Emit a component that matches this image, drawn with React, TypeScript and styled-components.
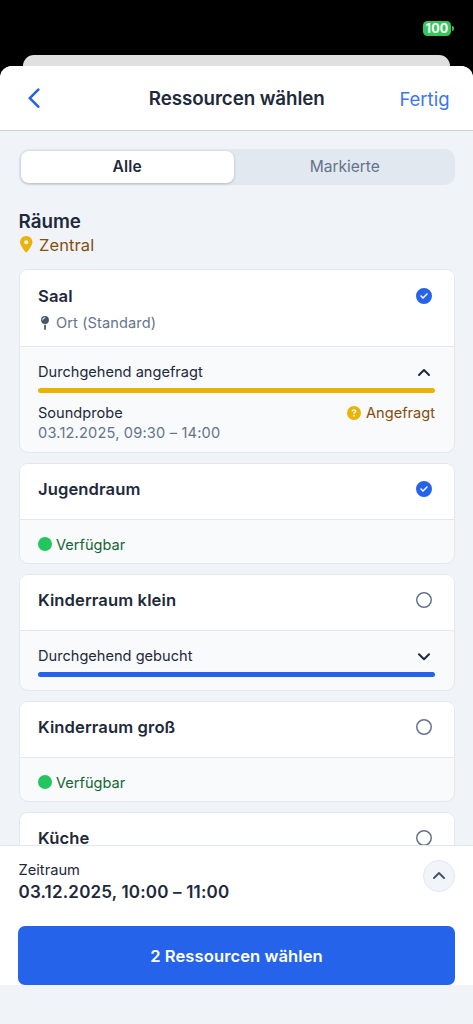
import React from "react";
import styled, { createGlobalStyle } from "styled-components";
import {
  FaCircle,
  FaCircleCheck,
  FaCircleQuestion,
  FaLocationDot,
  FaMapPin,
  FaRegCircle,
} from "react-icons/fa6";

const GlobalStyle = createGlobalStyle`
  *, *::before, *::after { box-sizing: border-box; }
  body {
    margin: 0;
    background: #000;
    color: #1e293b;
    font-family: Inter, "Liberation Sans", sans-serif;
  }
  h1, h2, h3, p { margin: 0; }
  button { border: 0; padding: 0; margin: 0; background: none; font: inherit; color: inherit; }
  svg { display: block; flex: none; }
`;

const Screen = styled.div`
  display: flex;
  flex-direction: column;
  height: 1024px;
  overflow: hidden;
  background: #000;
`;

const StatusBar = styled.div`
  display: flex;
  justify-content: flex-end;
  flex: none;
  height: 55px;
  padding: 20.5px 19.5px 0 0;
`;

const Battery = styled.div`
  display: flex;
  align-items: center;
  gap: 1px;
  height: 15.5px;
`;

const BatteryBody = styled.div`
  width: 28px;
  height: 15.5px;
  border-radius: 4.5px;
  background: #34c759;
  color: #fff;
  font-size: 12.5px;
  line-height: 15.5px;
  font-weight: 700;
  letter-spacing: 0.2px;
  text-align: center;
`;

const BatteryTip = styled.div`
  width: 1.5px;
  height: 5px;
  border-radius: 0 2px 2px 0;
  background: #34c759;
`;

const SheetBehind = styled.div`
  flex: none;
  height: 11px;
  margin: 0 23px;
  border-radius: 11px 11px 0 0;
  background: #e0e0e0;
`;

const Sheet = styled.div`
  display: flex;
  flex-direction: column;
  flex: 1;
  min-height: 0;
  border-radius: 12px 12px 0 0;
  background: #f0f4f8;
  overflow: hidden;
`;

const NavBar = styled.header`
  display: grid;
  grid-template-columns: 1fr auto 1fr;
  align-items: center;
  flex: none;
  height: 65px;
  padding: 0 23.5px 0 27px;
  border-bottom: 1px solid #cbcfd4;
  background: #fff;
`;

const NavTitle = styled.h1`
  margin: 2px 3px 0 0;
  font-size: 18.8px;
  line-height: 24px;
  font-weight: 600;
  letter-spacing: -0.1px;
`;

const NavAction = styled.button`
  justify-self: end;
  margin-top: 2px;
  color: #3b76f0;
  font-size: 18.5px;
  line-height: 24px;
`;

const Content = styled.main`
  flex: 1;
  min-height: 0;
  padding: 18px 18.5px 0 18.5px;
  overflow: hidden;
`;

const Segments = styled.div`
  display: flex;
  height: 36px;
  padding: 2px;
  border-radius: 10px;
  background: #e2e8f0;
`;

const Segment = styled.button<{ $active?: boolean }>`
  flex: ${(p) => (p.$active ? "0 0 213.5px" : "1")};
  padding: ${(p) => (p.$active ? "0 0 1px" : "0 0 1px 3px")};
  border-radius: 8px;
  background: ${(p) => (p.$active ? "#fff" : "transparent")};
  box-shadow: ${(p) => (p.$active ? "0 1px 3px rgba(15, 23, 42, 0.22)" : "none")};
  color: ${(p) => (p.$active ? "#1e293b" : "#64748b")};
  font-size: 15.6px;
  font-weight: ${(p) => (p.$active ? 600 : 400)};
  letter-spacing: ${(p) => (p.$active ? "0.2px" : "-0.05px")};
`;

const GroupTitle = styled.h2`
  margin-top: 24px;
  font-size: 18.8px;
  line-height: 25px;
  font-weight: 600;
`;

const Location = styled.div`
  display: flex;
  align-items: center;
  gap: 4.5px;
  height: 22px;
  color: #854d0e;
  font-size: 16.5px;
  letter-spacing: 0.1px;
  svg { color: #eab308; margin: -1px 0 0 -0.5px; }
`;

const Cards = styled.div`
  display: flex;
  flex-direction: column;
  gap: 10px;
  margin-top: 13px;
`;

const Card = styled.section`
  border: 1px solid #e2e8f0;
  border-radius: 9px;
  background: #f8fafc;
  overflow: hidden;
`;

const CardHead = styled.div<{ $tall?: boolean }>`
  display: flex;
  justify-content: space-between;
  align-items: flex-start;
  height: ${(p) => (p.$tall ? 77 : 56)}px;
  padding: ${(p) => (p.$tall ? 15 : 14)}px 22px 0 18.5px;
  border-bottom: 1px solid #e2e8f0;
  background: #fff;
`;

const CardTitle = styled.h3`
  font-size: 16.6px;
  line-height: 22px;
  font-weight: 600;
  letter-spacing: 0.1px;
`;

const CardPlace = styled.p`
  display: flex;
  align-items: center;
  gap: 4.5px;
  margin-top: 6px;
  color: #64748b;
  font-size: 14.6px;
  line-height: 21px;
  letter-spacing: 0.1px;
  svg { margin: -2px 0 0 -0.5px; color: #475569; }
`;

const Mark = styled.span<{ $on?: boolean }>`
  margin-top: 3px;
  color: ${(p) => (p.$on ? "#2563eb" : "#64748b")};
`;

const Available = styled.div`
  display: flex;
  align-items: center;
  gap: 4.5px;
  height: 43px;
  padding: 6px 18px 0;
  color: #166534;
  font-size: 14.6px;
  svg { margin-top: -1px; color: #22c55e; }
`;

const Booking = styled.div<{ $height: number }>`
  height: ${(p) => p.$height}px;
  padding: 15px 18.5px 0 18.5px;
  font-size: 14.6px;
  line-height: 21px;
`;

const BookingRow = styled.div`
  display: flex;
  justify-content: space-between;
  align-items: center;
`;

const ToggleIcon = styled.span`
  padding-right: 4.5px;
`;

const Bar = styled.div<{ $color: string }>`
  height: 4.5px;
  margin: 5px 0 10.5px -0.5px;
  border-radius: 3px;
  background: ${(p) => p.$color};
`;

const Muted = styled.p`
  color: #64748b;
  line-height: 19px;
  letter-spacing: 0.18px;
`;

const Requested = styled.span`
  display: flex;
  align-items: center;
  gap: 5px;
  color: #854d0e;
  svg { margin-top: -1px; color: #eab308; }
`;

const Footer = styled.footer`
  flex: none;
  height: 140px;
  padding: 13px 18px 0;
  border-top: 1px solid #e2e8f0;
  background: #fff;
`;

const Period = styled.div`
  display: flex;
  justify-content: space-between;
  height: 67px;
  padding-left: 0.5px;
`;

const PeriodLabel = styled.p`
  padding-top: 1px;
  font-size: 14.7px;
  line-height: 21px;
`;

const PeriodValue = styled.p`
  font-size: 17px;
  line-height: 22px;
  font-weight: 600;
  letter-spacing: 0.18px;
`;

const RoundButton = styled.button`
  display: grid;
  place-items: center;
  width: 32px;
  height: 32px;
  margin-top: 0.5px;
  border: 1px solid #e2e8f0;
  border-radius: 50%;
  background: #f1f5f9;
  color: #475569;
`;

const Submit = styled.button`
  width: 100%;
  height: 59px;
  border-radius: 7px;
  background: #2563eb;
  color: #fff;
  font-size: 16.6px;
  font-weight: 600;
  letter-spacing: 0.07px;
`;

const HomeArea = styled.div`
  flex: none;
  height: 39px;
`;

function Chevron({ down }: { down?: boolean }) {
  return (
    <svg width="14" height="14" viewBox="0 0 14 14" fill="none" stroke="currentColor" strokeWidth="2" strokeLinecap="round" strokeLinejoin="round">
      <path d={down ? "M2 4.2l5 5 5-5" : "M2 9l5-5 5 5"} />
    </svg>
  );
}

function SelectMark({ on }: { on?: boolean }) {
  return <Mark $on={on}>{on ? <FaCircleCheck size={16} /> : <FaRegCircle size={16} />}</Mark>;
}

function AvailableRoom({ name, on }: { name: string; on?: boolean }) {
  return (
    <Card>
      <CardHead>
        <CardTitle>{name}</CardTitle>
        <SelectMark on={on} />
      </CardHead>
      <Available>
        <FaCircle size={14} />
        Verfügbar
      </Available>
    </Card>
  );
}

export default function App() {
  return (
    <Screen>
      <GlobalStyle />
      <StatusBar>
        <Battery>
          <BatteryBody>100</BatteryBody>
          <BatteryTip />
        </Battery>
      </StatusBar>
      <SheetBehind />
      <Sheet>
        <NavBar>
          <svg width="14" height="20" viewBox="0 0 14 20" fill="none" stroke="#2563eb" strokeWidth="2.6" strokeLinecap="round" strokeLinejoin="round">
            <path d="M11.3 1.7 2.8 10.2l8.5 8.5" />
          </svg>
          <NavTitle>Ressourcen wählen</NavTitle>
          <NavAction>Fertig</NavAction>
        </NavBar>
        <Content>
          <Segments>
            <Segment $active>Alle</Segment>
            <Segment>Markierte</Segment>
          </Segments>
          <GroupTitle>Räume</GroupTitle>
          <Location>
            <FaLocationDot size={16.5} />
            Zentral
          </Location>
          <Cards>
            <Card>
              <CardHead $tall>
                <div>
                  <CardTitle>Saal</CardTitle>
                  <CardPlace>
                    <FaMapPin size={14} />
                    Ort (Standard)
                  </CardPlace>
                </div>
                <SelectMark on />
              </CardHead>
              <Booking $height={105}>
                <BookingRow>
                  Durchgehend angefragt
                  <ToggleIcon><Chevron /></ToggleIcon>
                </BookingRow>
                <Bar $color="#eab308" />
                <BookingRow>
                  Soundprobe
                  <Requested>
                    <FaCircleQuestion size={14} />
                    Angefragt
                  </Requested>
                </BookingRow>
                <Muted>03.12.2025, 09:30 – 14:00</Muted>
              </Booking>
            </Card>
            <AvailableRoom name="Jugendraum" on />
            <Card>
              <CardHead>
                <CardTitle>Kinderraum klein</CardTitle>
                <SelectMark />
              </CardHead>
              <Booking $height={59}>
                <BookingRow>
                  Durchgehend gebucht
                  <ToggleIcon><Chevron down /></ToggleIcon>
                </BookingRow>
                <Bar $color="#2563eb" />
              </Booking>
            </Card>
            <AvailableRoom name="Kinderraum groß" />
            <AvailableRoom name="Küche" />
          </Cards>
        </Content>
        <Footer>
          <Period>
            <div>
              <PeriodLabel>Zeitraum</PeriodLabel>
              <PeriodValue>03.12.2025, 10:00 – 11:00</PeriodValue>
            </div>
            <RoundButton aria-label="Zeitraum anzeigen">
              <Chevron />
            </RoundButton>
          </Period>
          <Submit>2 Ressourcen wählen</Submit>
        </Footer>
        <HomeArea />
      </Sheet>
    </Screen>
  );
}
